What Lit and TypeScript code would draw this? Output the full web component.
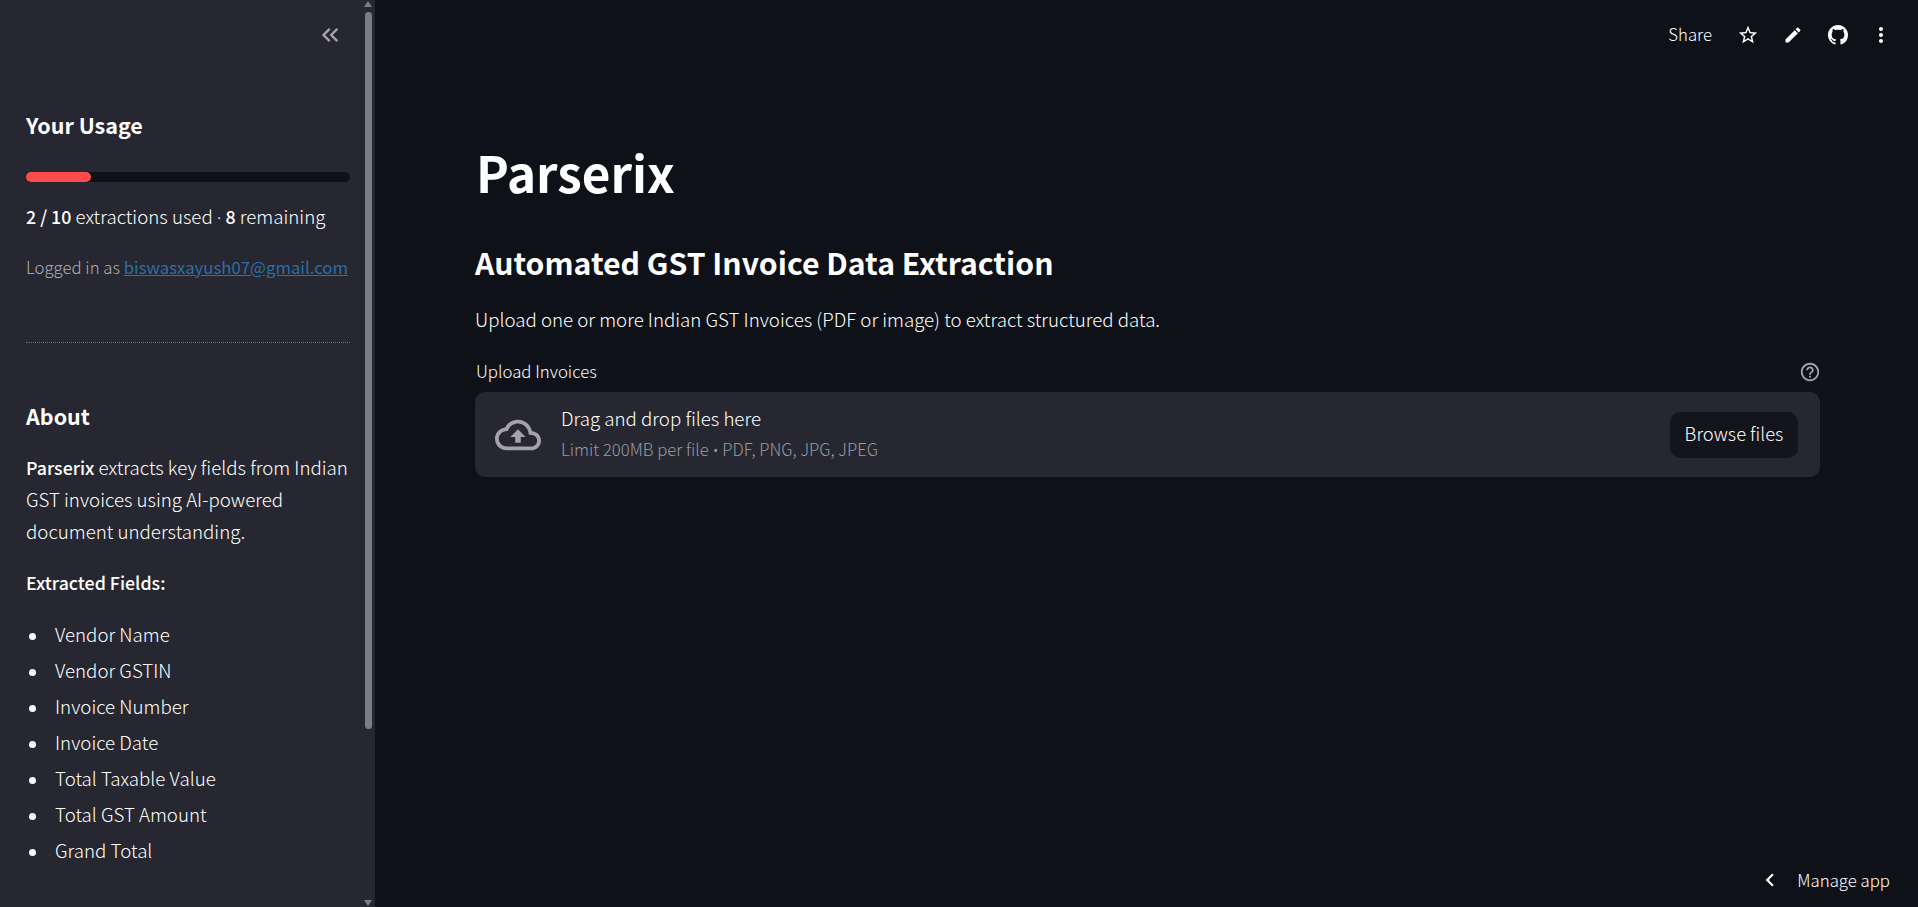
import { LitElement, html, css, svg } from 'lit';
import { customElement } from 'lit/decorators.js';

const icon = (size: number, d: string, cls = '', box = '0 0 24 24') => html`
  <svg class=${cls} width=${size} height=${size} viewBox=${box} fill="currentColor">${svg`<path d=${d}></path>`}</svg>
`;

const ICONS = {
  collapse: 'M17.59 18 19 16.59 14.42 12 19 7.41 17.59 6l-6 6zM11 18l1.41-1.41L7.83 12l4.58-4.59L11 6l-6 6z',
  star: 'M22 9.24l-7.19-.62L12 2 9.19 8.63 2 9.24l5.46 4.73L5.82 21 12 17.27 18.18 21l-1.63-7.03L22 9.24zM12 15.4l-3.76 2.27 1-4.28-3.32-2.88 4.38-.38L12 6.1l1.71 4.04 4.38.38-3.32 2.88 1 4.28L12 15.4z',
  edit: 'M3 17.25V21h3.75L17.81 9.94l-3.75-3.75L3 17.25zM20.71 7.04c.39-.39.39-1.02 0-1.41l-2.34-2.34c-.39-.39-1.02-.39-1.41 0l-1.83 1.83 3.75 3.75 1.83-1.83z',
  github: 'M8 0C3.58 0 0 3.58 0 8c0 3.54 2.29 6.53 5.47 7.59.4.07.55-.17.55-.38 0-.19-.01-.82-.01-1.49-2.01.37-2.53-.49-2.69-.94-.09-.23-.48-.94-.82-1.13-.28-.15-.68-.52-.01-.53.63-.01 1.08.58 1.23.82.72 1.21 1.87.87 2.33.66.07-.52.28-.87.51-1.07-1.78-.2-3.64-.89-3.64-3.95 0-.87.31-1.59.82-2.15-.08-.2-.36-1.02.08-2.12 0 0 .67-.21 2.2.82.64-.18 1.32-.27 2-.27.68 0 1.36.09 2 .27 1.53-1.04 2.2-.82 2.2-.82.44 1.1.16 1.92.08 2.12.51.56.82 1.27.82 2.15 0 3.07-1.87 3.75-3.65 3.95.29.25.54.73.54 1.48 0 1.07-.01 1.93-.01 2.2 0 .21.15.46.55.38A8.013 8.013 0 0016 8c0-4.42-3.58-8-8-8z',
  more: 'M12 8c1.1 0 2-.9 2-2s-.9-2-2-2-2 .9-2 2 .9 2 2 2zm0 2c-1.1 0-2 .9-2 2s.9 2 2 2 2-.9 2-2-.9-2-2-2zm0 6c-1.1 0-2 .9-2 2s.9 2 2 2 2-.9 2-2-.9-2-2-2z',
  cloud: 'M19.35 10.04C18.67 6.59 15.64 4 12 4 9.11 4 6.6 5.64 5.35 8.04 2.34 8.36 0 10.91 0 14c0 3.31 2.69 6 6 6h13c2.76 0 5-2.24 5-5 0-2.64-2.05-4.78-4.65-4.96zM19 18H6c-2.21 0-4-1.79-4-4 0-2.05 1.53-3.76 3.56-3.97l1.07-.11.5-.95C8.08 7.14 9.94 6 12 6c2.62 0 4.88 1.86 5.39 4.43l.3 1.5 1.53.11c1.56.1 2.78 1.41 2.78 2.96 0 1.65-1.35 3-3 3zM8 13h2.55v3h2.9v-3H16l-4-4z',
  help: 'M11 18h2v-2h-2v2zm1-16C6.48 2 2 6.48 2 12s4.48 10 10 10 10-4.48 10-10S17.52 2 12 2zm0 18c-4.41 0-8-3.59-8-8s3.59-8 8-8 8 3.59 8 8-3.59 8-8 8zm0-14c-2.21 0-4 1.79-4 4h2c0-1.1.9-2 2-2s2 .9 2 2c0 2-3 1.75-3 5h2c0-2.25 3-2.5 3-5 0-2.21-1.79-4-4-4z',
  chevron: 'M15.41 7.41 14 6l-6 6 6 6 1.41-1.41L10.83 12z',
};

const FIELDS = ['Vendor Name', 'Vendor GSTIN', 'Invoice Number', 'Invoice Date', 'Total Taxable Value', 'Total GST Amount', 'Grand Total'];

@customElement('app-root')
export class AppRoot extends LitElement {
  static styles = css`
    :host {
      display: flex;
      height: 100vh;
      overflow: hidden;
      background: #0e1117;
      color: #fff;
      font-family: 'Noto Sans CJK SC', 'Noto Sans', sans-serif;
      font-size: 18.7px;
      font-weight: 300;
    }
    .sidebar {
      position: relative;
      flex: 0 0 375px;
      box-sizing: border-box;
      padding: 21px 25px 0 26px;
      background: #262730;
      overflow: hidden;
    }
    .collapse {
      display: flex;
      justify-content: flex-end;
      height: 28px;
      padding-right: 6px;
      color: #a3a3a9;
    }
    h3 {
      margin: 0;
      font-size: 21.5px;
      line-height: 40px;
      font-weight: 600;
    }
    .usage { margin-top: 56px; }
    .track {
      margin-top: 27px;
      height: 10px;
      border-radius: 10px;
      background: #0e1117;
    }
    .fill {
      height: 100%;
      border-radius: 10px;
      background: #ff4b4b;
    }
    p { margin: 0; line-height: 32px; }
    b { font-weight: 500; font-size: 17.8px; }
    .dot { font-family: 'Noto Sans', sans-serif; }
    .counts { margin-top: 18px; white-space: nowrap; }
    .login {
      margin-top: 17.5px;
      color: #b0b0b5;
      font-size: 16.75px;
      white-space: nowrap;
    }
    .login a { color: #2f6ea8; text-decoration: underline; font-weight: 400; }
    hr {
      margin: 59.5px 0 0;
      border: 0;
      border-top: 1px dotted #70717a;
    }
    .about { margin-top: 53px; }
    .blurb { margin: 15px -6px 0 0; }
    .fields { margin-top: 19px; }
    ul {
      margin: 18px 0 0;
      padding: 0 0 0 29px;
      list-style: none;
    }
    li { line-height: 36px; }
    li::before {
      content: '';
      display: inline-block;
      width: 7px;
      height: 7px;
      margin: 0 19px 0 -26px;
      border-radius: 50%;
      background: #fafafa;
      vertical-align: 2px;
    }
    .bar {
      position: absolute;
      left: 365px;
      top: 12px;
      width: 7px;
      height: 717px;
      border-radius: 4px;
      background: #7c7c84;
    }
    .arrow {
      position: absolute;
      left: 364px;
      width: 0;
      height: 0;
      border-left: 4.5px solid transparent;
      border-right: 4.5px solid transparent;
    }
    .arrow.up { top: 1px; border-bottom: 6px solid #7c7c84; }
    .arrow.down { bottom: 1px; border-top: 6px solid #7c7c84; }

    .main {
      flex: 1;
      display: flex;
      flex-direction: column;
      min-width: 0;
    }
    .toolbar {
      display: flex;
      align-items: center;
      justify-content: flex-end;
      height: 70px;
      padding-right: 16px;
      font-size: 16.8px;
    }
    .share { margin-right: 13px; padding-bottom: 2px; }
    .tool {
      display: flex;
      align-items: center;
      justify-content: center;
      width: 45px;
    }
    .tool:last-child { width: 42px; }
    .content {
      flex: 1;
      padding: 67px 98px 0 100px;
    }
    h1 {
      margin: 0 0 0 1px;
      font-size: 49.4px;
      line-height: 70px;
      font-weight: 700;
    }
    h2 {
      margin: 33px 0 0;
      font-size: 30.2px;
      line-height: 44px;
      font-weight: 600;
    }
    .intro { margin-top: 19px; }
    .label-row {
      display: flex;
      align-items: center;
      justify-content: space-between;
      margin-top: 25px;
      height: 24px;
      font-size: 16.8px;
      padding: 0 0 0 1px;
    }
    .label-row span { padding-bottom: 2px; }
    .help { color: #a3a3a9; margin-right: -1px; }
    .drop {
      display: flex;
      align-items: center;
      margin-top: 8px;
      height: 85px;
      box-sizing: border-box;
      padding: 0 22px 0 20px;
      border-radius: 10px;
      background: #262730;
    }
    .cloud { color: #a3a3a9; }
    .drop-text { flex: 1; margin-left: 20px; padding-bottom: 3.5px; }
    .drop-title { line-height: 32px; }
    .drop-note {
      line-height: 26px;
      font-size: 16.7px;
      color: #9a9ba1;
      margin-top: 2px;
    }
    .browse {
      width: 128px;
      height: 46px;
      box-sizing: border-box;
      padding: 0 0 4px;
      border: 0;
      border-radius: 10px;
      background: #14151c;
      color: #fff;
      font: inherit;
      font-size: 18.4px;
    }
    .manage {
      display: flex;
      align-items: center;
      justify-content: flex-end;
      height: 54px;
      padding-right: 28px;
      font-size: 16.8px;
    }
    .manage svg { margin-right: 14.5px; }
  `;

  render() {
    return html`
      <aside class="sidebar">
        <div class="collapse">${icon(28, ICONS.collapse)}</div>
        <h3 class="usage">Your Usage</h3>
        <div class="track"><div class="fill" style="width: ${(2 / 10) * 100}%"></div></div>
        <p class="counts"><b>2 / 10</b> extractions used <span class="dot">·</span> <b>8</b> remaining</p>
        <p class="login">Logged in as <a href="#">biswasxayush07@gmail.com</a></p>
        <hr />
        <h3 class="about">About</h3>
        <p class="blurb"><b>Parserix</b> extracts key fields from Indian GST invoices using AI-powered document understanding.</p>
        <p class="fields"><b>Extracted Fields:</b></p>
        <ul>${FIELDS.map((f) => html`<li>${f}</li>`)}</ul>
        <div class="arrow up"></div>
        <div class="bar"></div>
        <div class="arrow down"></div>
      </aside>
      <main class="main">
        <div class="toolbar">
          <span class="share">Share</span>
          <span class="tool">${icon(22, ICONS.star)}</span>
          <span class="tool">${icon(20, ICONS.edit)}</span>
          <span class="tool">${icon(20, ICONS.github, '', '0 0 16 16')}</span>
          <span class="tool">${icon(24, ICONS.more)}</span>
        </div>
        <div class="content">
          <h1>Parserix</h1>
          <h2>Automated GST Invoice Data Extraction</h2>
          <p class="intro">Upload one or more Indian GST Invoices (PDF or image) to extract structured data.</p>
          <div class="label-row">
            <span>Upload Invoices</span>
            ${icon(22, ICONS.help, 'help')}
          </div>
          <div class="drop">
            ${icon(46, ICONS.cloud, 'cloud')}
            <div class="drop-text">
              <div class="drop-title">Drag and drop files here</div>
              <div class="drop-note">Limit 200MB per file <span class="dot">•</span> PDF, PNG, JPG, JPEG</div>
            </div>
            <button class="browse">Browse files</button>
          </div>
        </div>
        <div class="manage">
          ${icon(26, ICONS.chevron)}
          <span>Manage app</span>
        </div>
      </main>
    `;
  }
}
